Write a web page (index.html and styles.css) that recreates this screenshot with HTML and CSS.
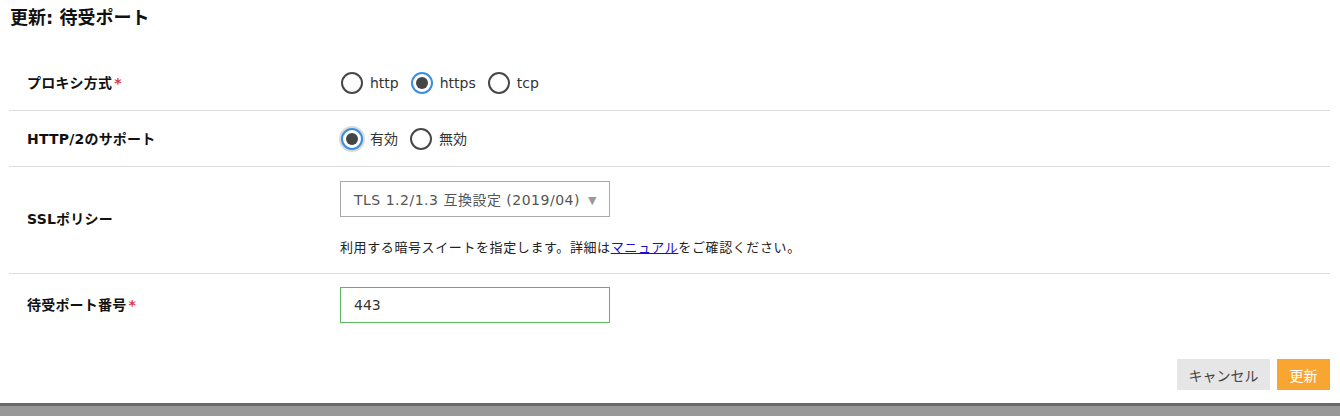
FILE: index.html
```html
<!DOCTYPE html>
<html lang="ja">
<head>
<meta charset="utf-8">
<title>更新: 待受ポート</title>
<link rel="stylesheet" href="styles.css">
</head>
<body>
<div class="page">
  <h1 class="title">更新: 待受ポート</h1>
  <div class="form">
    <div class="row row-short">
      <div class="label">プロキシ方式<span class="req">*</span></div>
      <div class="control radios">
        <label class="radio"><input type="radio" name="proto"><span>http</span></label>
        <label class="radio"><input type="radio" name="proto" checked><span>https</span></label>
        <label class="radio"><input type="radio" name="proto"><span>tcp</span></label>
      </div>
    </div>
    <div class="row row-short">
      <div class="label">HTTP/2のサポート</div>
      <div class="control radios">
        <label class="radio"><input type="radio" name="h2" class="focus" checked><span>有効</span></label>
        <label class="radio"><input type="radio" name="h2"><span>無効</span></label>
      </div>
    </div>
    <div class="row row-ssl">
      <div class="label">SSLポリシー</div>
      <div class="control">
        <div class="select"><span class="select-text">TLS 1.2/1.3 互換設定 (2019/04)</span><span class="arrow">▼</span></div>
        <p class="help">利用する暗号スイートを指定します。詳細は<a href="#">マニュアル</a>をご確認ください。</p>
      </div>
    </div>
    <div class="row row-port">
      <div class="label">待受ポート番号<span class="req">*</span></div>
      <div class="control">
        <div class="input">443</div>
      </div>
    </div>
  </div>
  <div class="actions">
    <button class="btn btn-cancel">キャンセル</button>
    <button class="btn btn-primary">更新</button>
  </div>
</div>
<div class="footer-bar"></div>
</body>
</html>
```
FILE: styles.css
```css
* { box-sizing: border-box; }
html, body { margin: 0; padding: 0; background: #fff; }
body {
  font-family: "DejaVu Sans", "Noto Sans CJK JP", sans-serif;
  color: #222;
  font-size: 14px;
  height: 416px;
  overflow: hidden;
  display: flex;
  flex-direction: column;
}
.page {
  padding: 0 10px 0 9px;
  flex: 1;
}
.title {
  margin: 0;
  height: 55px;
  padding: 6px 0 0 1px;
  font-size: 18px;
  line-height: 24px;
  font-weight: bold;
  color: #111;
}
.row {
  display: grid;
  grid-template-columns: 313px 1fr;
  align-items: center;
  padding-left: 18px;
  border-bottom: 1px solid #dcdcdc;
}
.row-short { height: 56px; }
.row-ssl { padding-top: 14px; padding-bottom: 16px; }
.row-port { border-bottom: none; padding-top: 13px; padding-bottom: 13px; }
.label {
  font-weight: bold;
  font-size: 14px;
  line-height: 20px;
  color: #111;
  letter-spacing: 0.2px;
}
.req { color: #e03a3a; margin-left: 2px; }
.radios { display: flex; align-items: center; padding-left: 1px; }
.radio {
  display: flex;
  align-items: center;
  margin-right: 12px;
  font-size: 14px;
  color: #333;
  line-height: 20px;
}
.radio input {
  appearance: none;
  -webkit-appearance: none;
  margin: 0 7px 0 0;
  width: 22px;
  height: 22px;
  border: 2px solid #484848;
  border-radius: 50%;
  background: #fff;
  display: grid;
  place-items: center;
}
.radio input:checked { border-color: #3b8fdc; }
.radio input:checked::after {
  content: "";
  width: 12px;
  height: 12px;
  border-radius: 50%;
  background: #454545;
}
.radio input.focus { box-shadow: 0 0 0 2px #dadada; }
.select {
  width: 270px;
  height: 36px;
  border: 1px solid #aaa;
  display: flex;
  align-items: center;
  padding: 0 8px 0 13px;
  font-size: 14px;
  color: #555;
  gap: 8px;
}
.select-text { letter-spacing: 0.5px; }
.arrow { color: #999; font-size: 11px; margin-top: 2px; }
.help {
  margin: 22px 0 0;
  font-size: 13px;
  line-height: 18px;
  color: #222;
  letter-spacing: 0.6px;
}
.help a { color: #1a0dcc; text-decoration: underline; }
.input {
  width: 270px;
  height: 36px;
  border: 1px solid #5cb85c;
  padding: 0 13px;
  display: flex;
  align-items: center;
  font-size: 14px;
  color: #333;
}
.actions {
  display: flex;
  justify-content: flex-end;
  gap: 7px;
  margin-top: 23px;
}
.btn {
  font-family: inherit;
  border: none;
  height: 31px;
  font-size: 14px;
  padding: 0;
  cursor: pointer;
}
.btn-cancel { background: #e6e6e6; color: #444; width: 93px; }
.btn-primary { background: #f9a532; color: #fff; width: 53px; }
.footer-bar {
  height: 13px;
  background: #999;
  border-top: 3px solid #6a6a6a;
}
```
